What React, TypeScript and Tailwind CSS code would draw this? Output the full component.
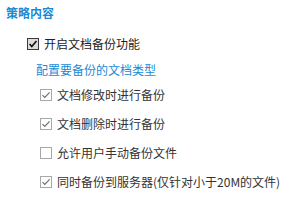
import { useState } from "react";

type Opt = { label: string; checked: boolean };

const initial: Opt[] = [
  { label: "文档修改时进行备份", checked: true },
  { label: "文档删除时进行备份", checked: true },
  { label: "允许用户手动备份文件", checked: false },
  { label: "同时备份到服务器(仅针对小于20M的文件)", checked: true },
];

// Flat light checkbox used for the file-type options.
function LightBox({ checked }: { checked: boolean }) {
  return (
    <svg width="12" height="12" viewBox="0 0 12 12" className="shrink-0">
      <rect x="0.5" y="0.5" width="11" height="11" fill="#fff" stroke="#a8a8a8" />
      {checked && (
        <path d="M2.5 6.2 L4.8 8.5 L9.6 3.4" fill="none" stroke="#6a6a6a" strokeWidth="1.1" />
      )}
    </svg>
  );
}

// Old style dark checkbox for the master switch.
function DarkBox({ checked }: { checked: boolean }) {
  return (
    <svg width="12" height="12" viewBox="0 0 12 12" className="shrink-0">
      <rect x="0.5" y="0.5" width="11" height="11" fill="#dcdcdc" stroke="#3a3a3a" />
      {checked && (
        <path d="M2.6 6 L4.8 8.6 L9.5 3" fill="none" stroke="#111" strokeWidth="1.6" />
      )}
    </svg>
  );
}

export default function App() {
  const [enabled, setEnabled] = useState(true);
  const [opts, setOpts] = useState(initial);

  return (
    <div
      className="flex h-[205px] w-[301px] flex-col bg-white pl-[6px] pt-[4px] text-[12px] text-[#333]"
      style={{ fontFamily: '"Noto Sans CJK SC", "Noto Sans", sans-serif' }}
    >
      <div className="h-[18px] font-bold leading-[18px] text-[#1a8ad4]">策略内容</div>

      <label
        className="ml-[21px] mt-[13px] flex h-[18px] cursor-pointer items-center gap-[5px] leading-[18px] text-[#222]"
        onClick={() => setEnabled((v) => !v)}
      >
        <DarkBox checked={enabled} />
        <span>开启文档备份功能</span>
      </label>

      <div className="ml-[30px] mt-[8px] h-[18px] leading-[18px] text-[#1a8ad4]">配置要备份的文档类型</div>

      <div className="ml-[34px] mt-[7px] flex flex-col gap-[11px]">
        {opts.map((o, i) => (
          <label
            key={o.label}
            className="flex h-[18px] cursor-pointer items-center gap-[5px] leading-[18px]"
            onClick={() =>
              setOpts((prev) => prev.map((p, j) => (j === i ? { ...p, checked: !p.checked } : p)))
            }
          >
            <LightBox checked={o.checked} />
            <span>{o.label}</span>
          </label>
        ))}
      </div>
    </div>
  );
}
